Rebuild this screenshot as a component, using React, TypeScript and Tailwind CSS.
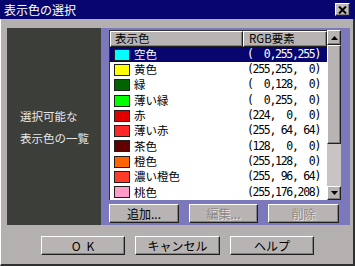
import React from "react";

const rows = [
  { name: "空色", rgb: "(  0,255,255)", sw: "bg-[#00ffff]" },
  { name: "黄色", rgb: "(255,255,  0)", sw: "bg-[#ffff00]" },
  { name: "緑", rgb: "(  0,128,  0)", sw: "bg-[#006400]" },
  { name: "薄い緑", rgb: "(  0,255,  0)", sw: "bg-[#00ff00]" },
  { name: "赤", rgb: "(224,  0,  0)", sw: "bg-[#e00000]" },
  { name: "薄い赤", rgb: "(255, 64, 64)", sw: "bg-[#ff2828]" },
  { name: "茶色", rgb: "(128,  0,  0)", sw: "bg-[#600000]" },
  { name: "橙色", rgb: "(255,128,  0)", sw: "bg-[#ff6400]" },
  { name: "濃い橙色", rgb: "(255, 96, 64)", sw: "bg-[#ff3c28]" },
  { name: "桃色", rgb: "(255,176,208)", sw: "bg-[#ff9cc8]" },
];

const font = "font-['Noto_Sans_CJK_JP',sans-serif]";
const mono = "font-['DejaVu_Sans_Mono',monospace]";

const raised =
  "border-t border-l border-t-white border-l-white border-b border-r border-b-[#202020] border-r-[#202020] shadow-[inset_-1px_-1px_0_#808080]";

function Btn({ children, w, disabled }: { children: React.ReactNode; w: string; disabled?: boolean }) {
  return (
    <div
      className={`${w} h-[19px] bg-[#b8b4b4] ${raised} flex items-center justify-center text-[12px] leading-none ${
        disabled ? "text-[#8c8888] [text-shadow:1px_1px_0_#e4e4e4]" : "text-black"
      }`}
    >
      {children}
    </div>
  );
}

export default function App() {
  return (
    <div className={`w-[355px] h-[266px] bg-[#b4b0b0] flex flex-col ${font}`}>
      {/* Title bar */}
      <div className="h-[19px] bg-[#06066e] flex items-center justify-between pl-[4px] pr-[5px]">
        <span className="text-white text-[12px] leading-none">表示色の選択</span>
        <div className={`w-[15px] h-[13px] bg-[#c0bcbc] ${raised} flex items-center justify-center`}>
          <svg width="9" height="8" viewBox="0 0 9 8">
            <path d="M1 0.5 L8 7.5 M8 0.5 L1 7.5" stroke="#000" strokeWidth="2" />
          </svg>
        </div>
      </div>
      {/* Body */}
      <div className="flex-1 flex flex-col border-l border-l-white border-r-2 border-r-[#303030] border-b-2 border-b-[#303030] pt-[9px] pl-[6px]">
        <div className="h-[197px] flex">
          <div className="w-[94px] bg-[#3c3e3a] flex flex-col justify-center pl-[13px] text-[#e6e6e6] text-[11.5px] leading-[22px]">
            <div>選択可能な</div>
            <div>表示色の一覧</div>
          </div>
          <div className="w-[249px] bg-[#7c78bc] pt-[2px] pl-[8px] flex flex-col">
            <div className="flex h-[170px]">
              <div className="w-[218px] h-[170px] bg-white border-t border-l border-[#303030] flex flex-col">
                <div className="h-[16px] flex text-[11.5px] leading-none">
                  <div className={`w-[133px] h-[16px] bg-[#b8b4b4] ${raised} flex items-center pl-[4px]`}>表示色</div>
                  <div className={`flex-1 h-[16px] bg-[#b8b4b4] ${raised} flex items-center pl-[5px]`}>RGB要素</div>
                </div>
                {rows.map((r, i) => (
                  <div
                    key={r.name}
                    className={`h-[17px] flex items-center ${i === 0 ? "bg-[#06066e] text-white" : "text-black"}`}
                  >
                    <div className={`ml-[4px] w-[16px] h-[12px] ${r.sw} border border-[#202020]`} />
                    <div className="ml-[4px] w-[113px] text-[11.5px] leading-none">{r.name}</div>
                    <div className={`${mono} text-[11.5px] tracking-[-1.3px] leading-none whitespace-pre`}>{r.rgb}</div>
                  </div>
                ))}
              </div>
              {/* Scrollbar */}
              <div className="w-[14px] h-[170px] flex flex-col bg-[#c8c4c4]">
                <div className={`h-[15px] bg-[#b8b4b4] ${raised} flex items-center justify-center`}>
                  <svg width="7" height="4" viewBox="0 0 7 4">
                    <path d="M3.5 0 L7 4 L0 4 Z" fill="#000" />
                  </svg>
                </div>
                <div className={`h-[99px] bg-[#b8b4b4] ${raised}`} />
                <div className="flex-1" />
                <div className={`h-[14px] bg-[#b8b4b4] ${raised} flex items-center justify-center`}>
                  <svg width="7" height="4" viewBox="0 0 7 4">
                    <path d="M0 0 L7 0 L3.5 4 Z" fill="#000" />
                  </svg>
                </div>
              </div>
            </div>
            <div className="mt-[4px] flex gap-[10px]">
              <Btn w="w-[70px]">追加...</Btn>
              <Btn w="w-[69px]" disabled>
                編集...
              </Btn>
              <Btn w="w-[71px]" disabled>
                削除
              </Btn>
            </div>
          </div>
        </div>
        <div className="mt-[11px] pl-[34px] flex gap-[10px]">
          <Btn w="w-[84px]">
            <span className="tracking-[6px] pl-[6px]">OK</span>
          </Btn>
          <Btn w="w-[85px]">キャンセル</Btn>
          <Btn w="w-[84px]">ヘルプ</Btn>
        </div>
      </div>
    </div>
  );
}
